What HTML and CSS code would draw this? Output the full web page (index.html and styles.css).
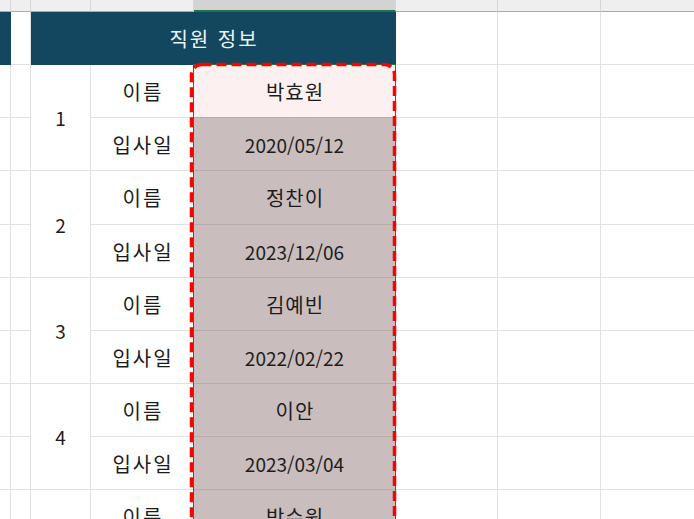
FILE: index.html
```html
<!DOCTYPE html>
<html lang="ko">
<head>
<meta charset="utf-8">
<title>직원 정보</title>
<link rel="stylesheet" href="styles.css">
</head>
<body>
<div class="sheet">
  <div class="hd"><span class="col-letter">A</span></div>
  <div class="hd"><span class="col-letter">B</span></div>
  <div class="hd"><span class="col-letter">C</span></div>
  <div class="hd"><span class="col-letter">D</span></div>
  <div class="hd hd-sel"><span class="col-letter">E</span></div>
  <div class="hd"><span class="col-letter">F</span></div>
  <div class="hd"><span class="col-letter">G</span></div>
  <div class="hd"><span class="col-letter">H</span></div>

  <div class="c teal"></div>
  <div class="c"></div>
  <div class="c teal title">직원 정보</div>
  <div class="c"></div>
  <div class="c"></div>
  <div class="c"></div>

  <div class="c"></div><div class="c"></div>
  <div class="c num">1</div>
  <div class="c lbl">이름</div>
  <div class="c val pink">박효원</div>
  <div class="c"></div><div class="c"></div><div class="c"></div>

  <div class="c"></div><div class="c"></div>
  <div class="c lbl">입사일</div>
  <div class="c val mauve date">2020/05/12</div>
  <div class="c"></div><div class="c"></div><div class="c"></div>

  <div class="c"></div><div class="c"></div>
  <div class="c num">2</div>
  <div class="c lbl">이름</div>
  <div class="c val mauve">정찬이</div>
  <div class="c"></div><div class="c"></div><div class="c"></div>

  <div class="c"></div><div class="c"></div>
  <div class="c lbl">입사일</div>
  <div class="c val mauve date">2023/12/06</div>
  <div class="c"></div><div class="c"></div><div class="c"></div>

  <div class="c"></div><div class="c"></div>
  <div class="c num">3</div>
  <div class="c lbl">이름</div>
  <div class="c val mauve">김예빈</div>
  <div class="c"></div><div class="c"></div><div class="c"></div>

  <div class="c"></div><div class="c"></div>
  <div class="c lbl">입사일</div>
  <div class="c val mauve date">2022/02/22</div>
  <div class="c"></div><div class="c"></div><div class="c"></div>

  <div class="c"></div><div class="c"></div>
  <div class="c num">4</div>
  <div class="c lbl">이름</div>
  <div class="c val mauve">이안</div>
  <div class="c"></div><div class="c"></div><div class="c"></div>

  <div class="c"></div><div class="c"></div>
  <div class="c lbl">입사일</div>
  <div class="c val mauve date">2023/03/04</div>
  <div class="c"></div><div class="c"></div><div class="c"></div>

  <div class="c"></div><div class="c"></div>
  <div class="c num">5</div>
  <div class="c lbl">이름</div>
  <div class="c val mauve">박수원</div>
  <div class="c"></div><div class="c"></div><div class="c"></div>

  <div class="c"></div><div class="c"></div>
  <div class="c lbl">입사일</div>
  <div class="c val mauve date">2021/08/15</div>
  <div class="c"></div><div class="c"></div><div class="c"></div>

  <div class="selection"></div>
  <svg class="dash" width="210" height="520" viewBox="0 0 210 520" aria-hidden="true">
    <rect x="2.5" y="2.5" width="203" height="560" rx="10" ry="10" fill="none" stroke="#ff0000" stroke-width="3.5" stroke-dasharray="10 5"/>
  </svg>
</div>
</body>
</html>
```

FILE: styles.css
```css
html, body {
  margin: 0;
  padding: 0;
  background: #ffffff;
  overflow: hidden;
}

body {
  width: 694px;
  height: 519px;
  font-family: "Noto Sans CJK KR", "Noto Sans", sans-serif;
  color: #1c1c1c;
}

.sheet {
  position: relative;
  display: grid;
  grid-template-columns: 11px 20px 60px 103px 202px 102px 103px 103px;
  grid-template-rows: 12px 53px 53px 53px 54px 53px 53px 53px 53px 53px 53px 53px;
  width: 757px;
}

.hd {
  box-sizing: border-box;
  background: #efefef;
  border-right: 1px solid #d6d6d6;
  border-bottom: 1px solid #ababab;
  overflow: hidden;
  display: flex;
  justify-content: center;
  align-items: flex-start;
}

.hd-sel {
  background: #d3d3d3;
  border-bottom: 2px solid #217346;
}

.col-letter {
  font-family: "Liberation Sans", sans-serif;
  font-size: 13px;
  line-height: 13px;
  margin-top: -11px;
  color: #666666;
}

.hd-sel .col-letter {
  color: #1d6b40;
}

.c {
  box-sizing: border-box;
  border-right: 1px solid #e1e1e1;
  border-bottom: 1px solid #e1e1e1;
  display: flex;
  align-items: center;
  justify-content: center;
  font-size: 20px;
  white-space: nowrap;
}

.teal {
  background: #12475f;
  border-color: #12475f;
}

.title {
  grid-column: span 3;
  color: #eef3f6;
  font-size: 20px;
  letter-spacing: 2px;
  padding-left: 2px;
}

.num {
  grid-row: span 2;
  font-size: 19px;
}

.lbl {
  letter-spacing: 2px;
  padding-left: 2px;
}

.val {
  border-bottom-color: #b7abab;
  letter-spacing: 1px;
  padding-left: 1px;
}

.date {
  font-size: 19px;
  letter-spacing: 0;
  padding-left: 0;
}

.pink {
  background: #fdf0f0;
}

.mauve {
  background: #c9bdbd;
}

.selection {
  position: absolute;
  left: 193px;
  top: 64px;
  width: 203px;
  height: 470px;
  box-sizing: border-box;
  border: 1px solid #217346;
  pointer-events: none;
}

.dash {
  position: absolute;
  left: 189px;
  top: 62px;
  pointer-events: none;
}
```
